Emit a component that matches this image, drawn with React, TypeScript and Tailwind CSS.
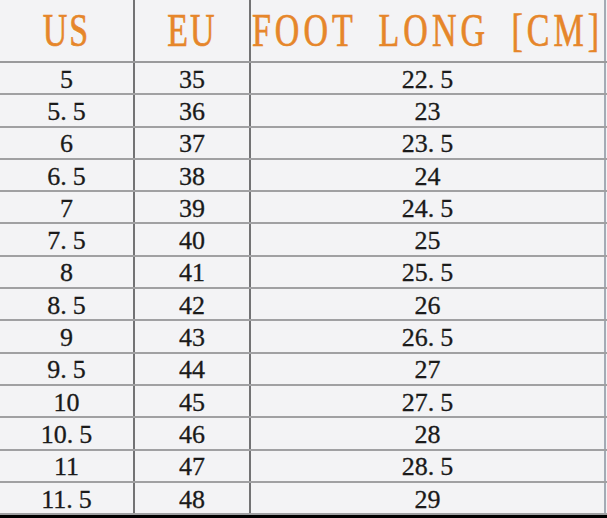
const ROWS: [string, string, string][] = [
  ["5", "35", "22.5"],
  ["5.5", "36", "23"],
  ["6", "37", "23.5"],
  ["6.5", "38", "24"],
  ["7", "39", "24.5"],
  ["7.5", "40", "25"],
  ["8", "41", "25.5"],
  ["8.5", "42", "26"],
  ["9", "43", "26.5"],
  ["9.5", "44", "27"],
  ["10", "45", "27.5"],
  ["10.5", "46", "28"],
  ["11", "47", "28.5"],
  ["11.5", "48", "29"],
];

function Num({ v }: { v: string }) {
  const [a, b] = v.split(".");
  return (
    <span>
      {a}
      {b !== undefined && (
        <>
          <span className="mr-[6px]">.</span>
          {b}
        </>
      )}
    </span>
  );
}

const serif = { fontFamily: '"Liberation Serif", "Times New Roman", serif' };

export default function App() {
  return (
    <div
      className="flex h-[518px] w-[607px] flex-col overflow-hidden bg-[#f3f3f5]"
      style={serif}
    >
      <div className="flex h-[63px] shrink-0 border-b-2 border-[#9a9a9c] text-[34px] text-[#e6862a] [-webkit-text-stroke:0.5px_#e6862a]">
        <div className="flex w-[135px] items-center justify-center border-r-2 border-[#727274]">
          <span className="inline-block scale-y-[1.34] tracking-[2px]">US</span>
        </div>
        <div className="flex w-[116px] items-center justify-center border-r-2 border-[#727274]">
          <span className="inline-block scale-y-[1.34] tracking-[2px]">EU</span>
        </div>
        <div className="flex w-[355px] items-center justify-center border-r-2 border-[#a3abb5]">
          <span className="inline-block scale-y-[1.34] tracking-[4px] [word-spacing:10px]">
            FOOT LONG [CM]
          </span>
        </div>
      </div>

      {ROWS.map(([us, eu, cm]) => (
        <div
          key={us}
          className="flex h-[32.3px] shrink-0 border-b-2 border-[#a0a0a2] text-[26px] leading-none text-[#1a1a1a] [-webkit-text-stroke:0.3px_#1a1a1a]"
        >
          <div className="flex w-[135px] items-center justify-center border-r-2 border-[#727274] pt-[3px]">
            <Num v={us} />
          </div>
          <div className="flex w-[116px] items-center justify-center border-r-2 border-[#727274] pt-[3px]">
            <Num v={eu} />
          </div>
          <div className="flex w-[355px] items-center justify-center border-r-2 border-[#a3abb5] pt-[3px]">
            <Num v={cm} />
          </div>
        </div>
      ))}

      <div className="h-[6px] shrink-0 bg-black" />
    </div>
  );
}
